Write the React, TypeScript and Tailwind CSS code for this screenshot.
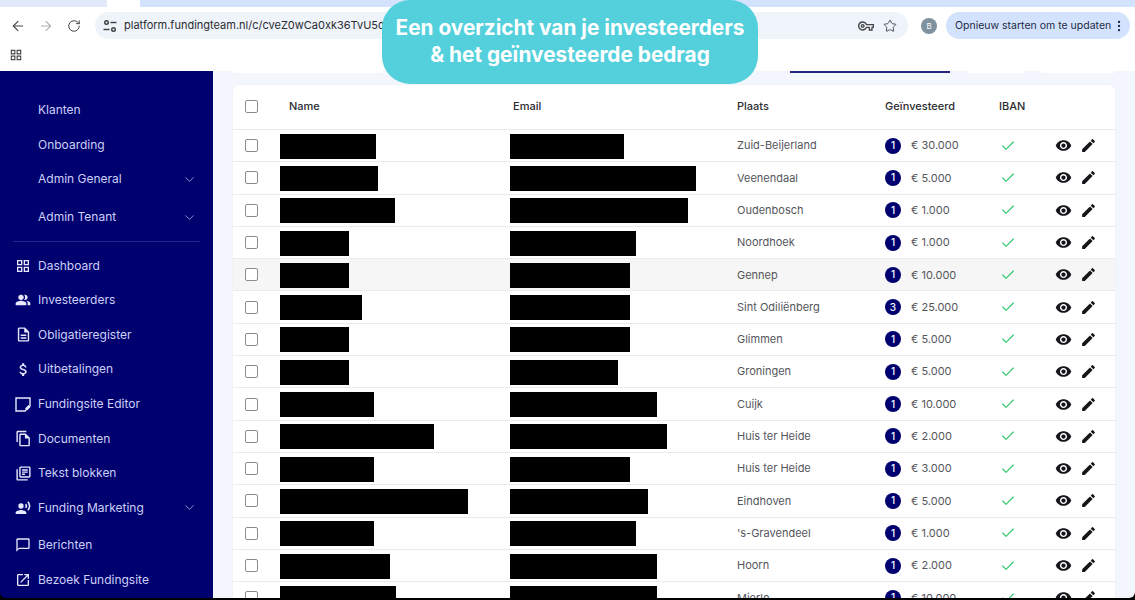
import { ArrowLeft, ArrowRight, Check, ChevronDown, EllipsisVertical, RotateCw, Star } from 'lucide-react';
import {
    MdAttachMoney,
    MdEdit,
    MdOpenInNew,
    MdOutlineChatBubbleOutline,
    MdOutlineDescription,
    MdOutlineGridView,
    MdOutlineLibraryBooks,
    MdOutlineFileCopy,
    MdOutlineVpnKey,
    MdPeopleAlt,
    MdRecordVoiceOver,
    MdRemoveRedEye,
} from 'react-icons/md';

type Investor = {
    nameWidth: string;
    emailWidth: string;
    city: string;
    count: number;
    amount: string;
};

const investors: Investor[] = [
    { nameWidth: 'w-[96px]', emailWidth: 'w-[114px]', city: 'Zuid-Beijerland', count: 1, amount: '€ 30.000' },
    { nameWidth: 'w-[98px]', emailWidth: 'w-[186px]', city: 'Veenendaal', count: 1, amount: '€ 5.000' },
    { nameWidth: 'w-[115px]', emailWidth: 'w-[178px]', city: 'Oudenbosch', count: 1, amount: '€ 1.000' },
    { nameWidth: 'w-[69px]', emailWidth: 'w-[126px]', city: 'Noordhoek', count: 1, amount: '€ 1.000' },
    { nameWidth: 'w-[69px]', emailWidth: 'w-[120px]', city: 'Gennep', count: 1, amount: '€ 10.000' },
    { nameWidth: 'w-[82px]', emailWidth: 'w-[120px]', city: 'Sint Odiliënberg', count: 3, amount: '€ 25.000' },
    { nameWidth: 'w-[69px]', emailWidth: 'w-[120px]', city: 'Glimmen', count: 1, amount: '€ 5.000' },
    { nameWidth: 'w-[69px]', emailWidth: 'w-[108px]', city: 'Groningen', count: 1, amount: '€ 5.000' },
    { nameWidth: 'w-[94px]', emailWidth: 'w-[147px]', city: 'Cuijk', count: 1, amount: '€ 10.000' },
    { nameWidth: 'w-[154px]', emailWidth: 'w-[157px]', city: 'Huis ter Heide', count: 1, amount: '€ 2.000' },
    { nameWidth: 'w-[94px]', emailWidth: 'w-[120px]', city: 'Huis ter Heide', count: 1, amount: '€ 3.000' },
    { nameWidth: 'w-[188px]', emailWidth: 'w-[138px]', city: 'Eindhoven', count: 1, amount: '€ 5.000' },
    { nameWidth: 'w-[94px]', emailWidth: 'w-[126px]', city: "'s-Gravendeel", count: 1, amount: '€ 1.000' },
    { nameWidth: 'w-[110px]', emailWidth: 'w-[147px]', city: 'Hoorn', count: 1, amount: '€ 2.000' },
    { nameWidth: 'w-[116px]', emailWidth: 'w-[147px]', city: 'Mierlo', count: 1, amount: '€ 10.000' },
];

function SiteInfoIcon() {
    return (
        <svg width="16" height="16" viewBox="0 0 16 16" fill="none" stroke="#3c4043" strokeWidth="1.4">
            <circle cx="4.5" cy="4.5" r="1.8" />
            <path d="M8.5 4.5h6" />
            <circle cx="11.5" cy="11.5" r="1.8" />
            <path d="M1.5 11.5h6" />
        </svg>
    );
}

function EditorIcon() {
    return (
        <svg width="16" height="16" viewBox="0 0 16 16" fill="none" stroke="currentColor" strokeWidth="1.4">
            <path d="M1 2h14v8l-5 5H1z" />
            <path d="M15 10.5l-3 3-1-1 3-3" fill="currentColor" />
        </svg>
    );
}

function NavItem({ label, icon, chevron }: { label: string; icon?: React.ReactNode; chevron?: boolean }) {
    return (
        <div className={`flex items-center h-[34.6px] pl-[13px] pr-[16px] text-[12px] text-[#ccd0f6] ${chevron ? 'mb-[3px]' : ''}`}>
            <span className="w-[22px] flex justify-center items-center -ml-[1px] mr-[4px] text-[#e6e8fb]">{icon}</span>
            <span className="flex-1">{label}</span>
            {chevron && <ChevronDown size={15} strokeWidth={1.3} className="text-[#a9aee8]" />}
        </div>
    );
}

function Sidebar() {
    return (
        <aside className="w-[213px] shrink-0 bg-[#00006f] rounded-bl-md pt-[22px]">
            <NavItem label="Klanten" />
            <NavItem label="Onboarding" />
            <NavItem label="Admin General" chevron />
            <NavItem label="Admin Tenant" chevron />
            <div className="mx-[13px] mt-[7px] mb-[6px] h-[1px] bg-[#26268a]" />
            <NavItem label="Dashboard" icon={<MdOutlineGridView size={16} />} />
            <NavItem label="Investeerders" icon={<MdPeopleAlt size={16} />} />
            <NavItem label="Obligatieregister" icon={<MdOutlineDescription size={17} />} />
            <NavItem label="Uitbetalingen" icon={<MdAttachMoney size={17} />} />
            <NavItem label="Fundingsite Editor" icon={<EditorIcon />} />
            <NavItem label="Documenten" icon={<MdOutlineFileCopy size={17} />} />
            <NavItem label="Tekst blokken" icon={<MdOutlineLibraryBooks size={17} />} />
            <NavItem label="Funding Marketing" icon={<MdRecordVoiceOver size={16} />} chevron />
            <NavItem label="Berichten" icon={<MdOutlineChatBubbleOutline size={16} />} />
            <NavItem label="Bezoek Fundingsite" icon={<MdOpenInNew size={16} />} />
        </aside>
    );
}

function Checkbox() {
    return <span className="block w-[13px] h-[13px] rounded-[2px] border border-[#8c8c90] bg-white" />;
}

const rowGrid = 'grid grid-cols-[47px_230px_227px_148px_114px_57px_1fr] items-center';

function InvestorRow({ investor, hovered }: { investor: Investor; hovered: boolean }) {
    return (
        <div className={`${rowGrid} h-[32.3px] shrink-0 border-b border-[#ebebee] ${hovered ? 'bg-[#f5f6f5]' : ''}`}>
            <span className="pl-[12px]">
                <Checkbox />
            </span>
            <span className={`block h-[25px] mt-[1px] bg-black ${investor.nameWidth}`} />
            <span className={`block h-[25px] mt-[1px] bg-black ${investor.emailWidth}`} />
            <span className="text-[11px] text-[#55565c]">{investor.city}</span>
            <span className="flex items-center text-[11px] text-[#55565c]">
                <span className="w-[16px] h-[16px] rounded-full bg-[#00006f] text-white text-[10px] font-medium flex items-center justify-center mr-[10px]">
                    {investor.count}
                </span>
                {investor.amount}
            </span>
            <Check size={16} strokeWidth={1.6} className="text-[#2cc56a] ml-[1px]" />
            <span className="flex items-center gap-[8px] text-[#16161a] -ml-[1px]">
                <MdRemoveRedEye size={17} />
                <MdEdit size={17} />
            </span>
        </div>
    );
}

export default function App() {
    return (
        <div className="relative h-[600px] overflow-hidden bg-black flex flex-col" style={{ fontFamily: 'Inter, sans-serif' }}>
            {/* browser chrome */}
            <div className="h-[7px] shrink-0 flex bg-[#d3e3fd]">
                <div className="w-[107px] bg-[#e2e9fb]" />
                <div className="w-[33px] bg-white" />
            </div>
            <div className="h-[37px] bg-white shrink-0 flex items-center pl-[10px] pr-[5px] text-[#45474b]">
                <ArrowLeft size={16} strokeWidth={1.6} className="mr-[12px]" />
                <ArrowRight size={16} strokeWidth={1.6} className="text-[#adb0b5] mr-[13px]" />
                <RotateCw size={14} strokeWidth={1.7} className="mr-[14px]" />
                <div className="flex-1 h-[27px] rounded-full bg-[#eff3fa] flex items-center pl-[7px] pr-[11px]">
                    <SiteInfoIcon />
                    <span className="ml-[6px] text-[11px] text-[#2a2c30] flex-1">platform.fundingteam.nl/c/cveZ0wCa0xk36TvU5d</span>
                    <MdOutlineVpnKey size={16} className="mr-[9px]" />
                    <Star size={14} strokeWidth={1.6} />
                </div>
                <span className="w-[16px] h-[16px] ml-[13px] mr-[9px] rounded-full bg-[#7f929e] text-white text-[8px] flex items-center justify-center">B</span>
                <div className="w-[184px] h-[27px] rounded-full bg-[#d3e3fd] flex items-center pl-[9px] pr-[4px] text-[10.5px] text-[#1f2a44]">
                    <span className="flex-1 whitespace-nowrap">Opnieuw starten om te updaten</span>
                    <EllipsisVertical size={14} />
                </div>
            </div>
            <div className="h-[27px] bg-white shrink-0 flex items-start pt-[4px] pl-[9px] text-[#45474b]">
                <MdOutlineGridView size={14} />
            </div>

            {/* app */}
            <div className="flex flex-1 min-h-0">
                <Sidebar />
                <main className="flex-1 min-w-0 bg-[#f4f6fe] rounded-br-md pl-[20px] pr-[20px] overflow-hidden flex flex-col">
                    <div className="h-[2px] shrink-0 flex mb-[12px]">
                        <div className="w-[150px] bg-white" />
                        <div className="ml-[407px] w-[160px] bg-[#24247f]" />
                        <div className="ml-[18px] w-[56px] bg-white" />
                        <div className="ml-[17px] w-[73px] bg-white" />
                    </div>
                    <section className="bg-white rounded-t-md flex flex-col shrink-0 shadow-[0_0_2px_rgba(0,0,40,0.06)]">
                        <div className={`${rowGrid} h-[45px] pb-[2px] shrink-0 border-b border-[#ebebee] text-[11px] font-medium text-[#2b2c30]`}>
                            <span className="pl-[12px]">
                                <Checkbox />
                            </span>
                            <span className="pl-[9px]">Name</span>
                            <span className="pl-[3px]">Email</span>
                            <span>Plaats</span>
                            <span>Geïnvesteerd</span>
                            <span>IBAN</span>
                            <span />
                        </div>
                        {investors.map((investor, index) => (
                            <InvestorRow key={index} investor={investor} hovered={index === 4} />
                        ))}
                    </section>
                </main>
            </div>
            <div className="h-[2px] bg-black shrink-0" />

            {/* promo banner */}
            <div className="absolute left-[382px] top-0 w-[376px] h-[84px] rounded-[28px] bg-[#53d0dc] flex flex-col items-center justify-center pb-[2px] text-white font-bold text-[20.8px] leading-[27px]">
                <span>Een overzicht van je investeerders</span>
                <span>&amp; het geïnvesteerde bedrag</span>
            </div>
        </div>
    );
}
